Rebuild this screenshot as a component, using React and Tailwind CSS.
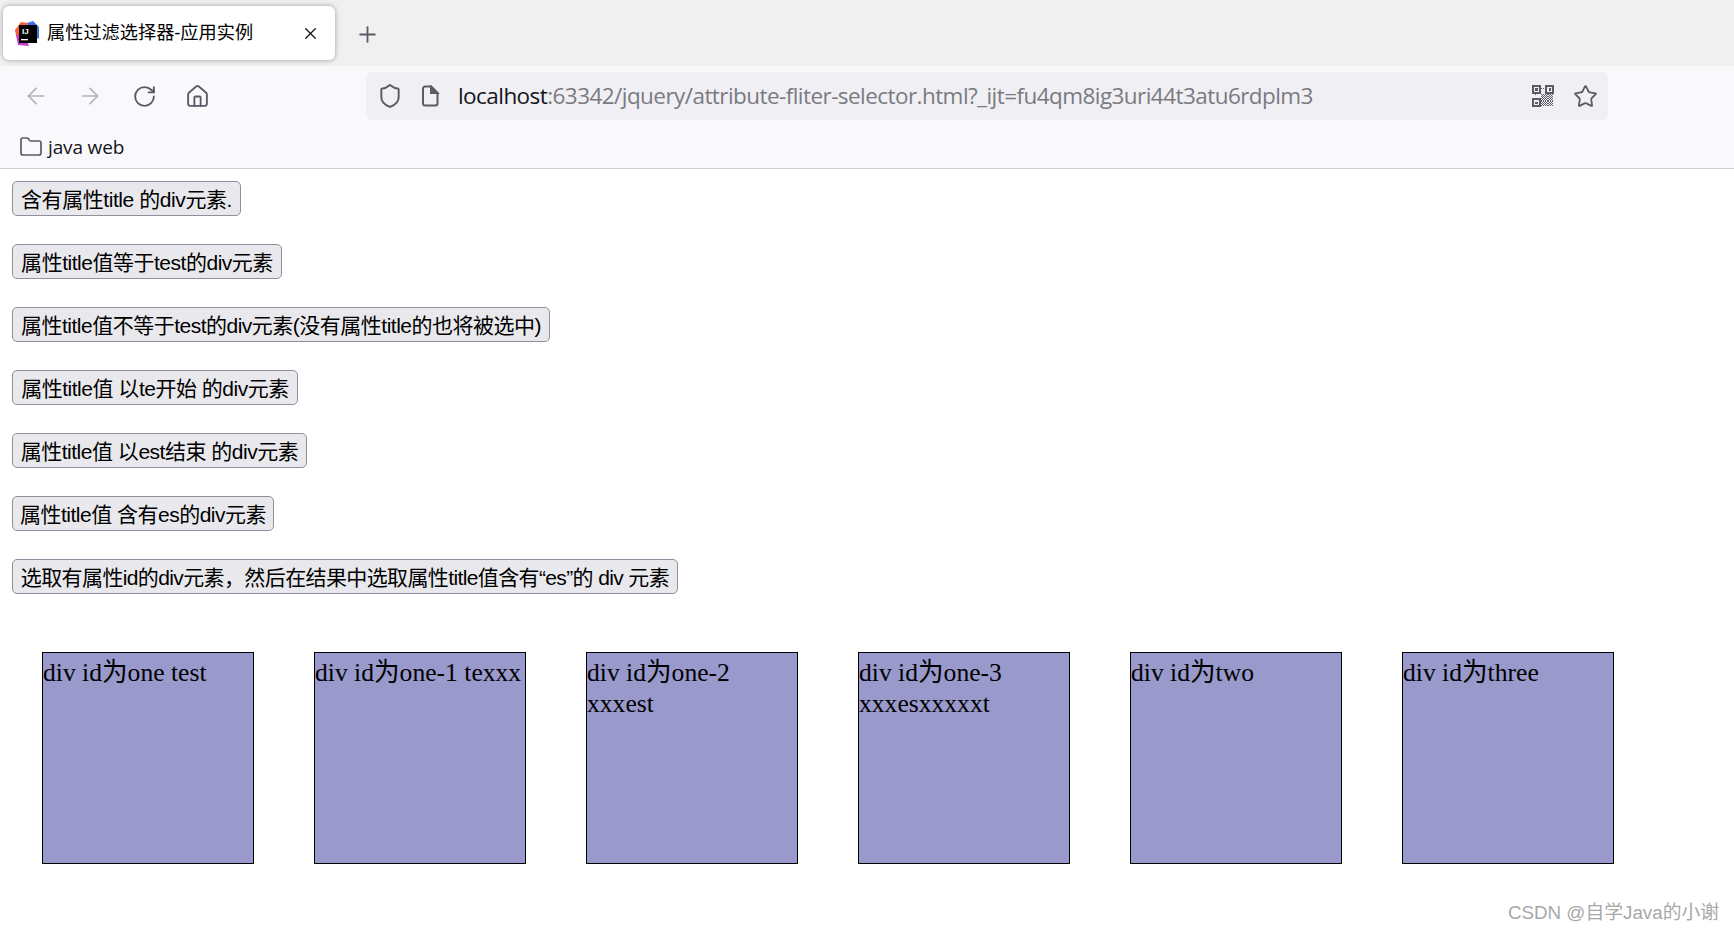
import React from "react";
import { ArrowLeft, ArrowRight, RotateCw, House, Shield, Star, Folder, X, Plus } from "lucide-react";

const cjk = "font-['Liberation_Sans','Noto_Sans_CJK_SC',sans-serif]";

const buttons = [
  { t: "含有属性title 的div元素.", w: "w-[229px]", s: "tracking-[-0.42px]" },
  { t: "属性title值等于test的div元素", w: "w-[270px]", s: "tracking-[-0.48px]" },
  { t: "属性title值不等于test的div元素(没有属性title的也将被选中)", w: "w-[538px]", s: "tracking-[-0.5px]" },
  { t: "属性title值 以te开始 的div元素", w: "w-[286px]", s: "tracking-[-0.48px]" },
  { t: "属性title值 以est结束 的div元素", w: "w-[295px]", s: "tracking-[-0.48px]" },
  { t: "属性title值 含有es的div元素", w: "w-[262px]", s: "tracking-[-0.5px]" },
  { t: "选取有属性id的div元素，然后在结果中选取属性title值含有“es”的 div 元素", w: "w-[666px]", s: "tracking-[-0.62px]" },
];

const boxes = [
  "div id为one test",
  "div id为one-1 texxx",
  "div id为one-2 xxxest",
  "div id为one-3 xxxesxxxxxt",
  "div id为two",
  "div id为three",
];

function Favicon() {
  return (
    <svg width="24" height="25" viewBox="0 0 24 25">
      <path d="M0 9 L6 1 L13 2 L9 15 L1 14 Z" fill="#ff5a36" />
      <path d="M12 2 L18 0 L24 6 L24 18 L16 14 Z" fill="#3f6fe8" />
      <path d="M1 14 L3 24 L14 25 L9 13 Z" fill="#c83ac8" />
      <rect x="4" y="4" width="18" height="18" fill="#000" />
      <text x="7" y="13" fontSize="8" fontWeight="700" fill="#fff" fontFamily="Liberation Sans">IJ</text>
      <rect x="6" y="18" width="7" height="1.3" fill="#fff" />
    </svg>
  );
}

function PageIcon() {
  return (
    <svg width="20" height="22" viewBox="0 0 20 22" fill="none" stroke="#5b5b66" strokeWidth="2">
      <path d="M3 3.5 A2 2 0 0 1 5 1.5 H11 L17.5 8 V18.5 A2 2 0 0 1 15.5 20.5 H5 A2 2 0 0 1 3 18.5 Z" />
      <path d="M11 1.5 L17.5 8 H11 Z" fill="#5b5b66" />
    </svg>
  );
}

function Qr() {
  const cells = [
    [8, 3], [10, 3], [3, 8], [8, 8], [10, 8], [12, 8], [14, 8], [16, 8], [18, 8],
    [9, 9], [11, 9], [13, 9], [15, 9], [17, 9],
    [8, 10], [10, 10], [12, 10], [14, 10], [16, 10], [18, 10],
    [9, 11], [11, 11], [13, 11], [15, 11], [17, 11],
    [8, 12], [10, 12], [12, 12], [14, 12], [16, 12], [18, 12],
    [9, 13], [11, 13], [13, 13], [15, 13], [17, 13],
    [8, 14], [10, 14], [12, 14], [14, 14], [16, 14], [18, 14],
    [9, 15], [11, 15], [13, 15], [15, 15], [17, 15],
    [8, 16], [10, 16], [12, 16], [14, 16], [16, 16], [18, 16],
    [9, 17], [11, 17], [13, 17], [15, 17], [17, 17],
    [8, 18], [10, 18], [12, 18], [14, 18], [16, 18], [18, 18],
  ];
  return (
    <svg width="22" height="22" viewBox="0 0 20 20" fill="#5b5b66" shapeRendering="crispEdges">
      {[[0, 0], [12, 0], [0, 12]].map(([x, y], i) => (
        <g key={i}>
          <rect x={x + 0.75} y={y + 0.75} width="6.5" height="6.5" fill="none" stroke="#5b5b66" strokeWidth="1.5" />
          <rect x={x + 3} y={y + 3} width="2" height="2" />
        </g>
      ))}
      {cells.map(([x, y], i) => (
        <rect key={i} x={x} y={y} width="1" height="1" />
      ))}
    </svg>
  );
}

export default function App() {
  return (
    <div className={`min-h-[931px] bg-white text-black ${cjk}`}>
      <div className="h-[66px] bg-[#f0f0f1] flex items-start pl-[3px] pt-[6px]">
        <div className="w-[332px] h-[54px] bg-white rounded-[6px] shadow-[0_0_5px_rgba(0,0,0,0.35)] flex items-center pl-[12px] pr-[15px]">
          <Favicon />
          <span className="ml-[8px] pt-[1px] text-[18.2px] flex-1 whitespace-nowrap">属性过滤选择器-应用实例</span>
          <X size={19} strokeWidth={1.6} color="#15141a" />
        </div>
        <div className="ml-[20px] mt-[16px]">
          <Plus size={25} strokeWidth={1.8} color="#5b5b66" />
        </div>
      </div>

      <div className="h-[102px] bg-[#f9f9fb] border-b border-[#cfcfd8] box-content">
        <div className="h-[54px] pt-[6px] flex items-center">
          <div className="w-[366px] flex items-center pl-[23px] gap-[28px]">
            <ArrowLeft size={26} strokeWidth={1.6} color="#b3b3b8" />
            <ArrowRight size={26} strokeWidth={1.6} color="#b3b3b8" />
            <span className="ml-[1px]"><RotateCw size={25} strokeWidth={1.8} color="#5b5b66" /></span>
            <House size={25} strokeWidth={1.8} color="#5b5b66" />
          </div>
          <div className="w-[1242px] h-[48px] bg-[#f0f0f4] rounded-[6px] flex items-center pl-[11px] pr-[10px]">
            <Shield size={26} strokeWidth={1.8} color="#5b5b66" />
            <span className="ml-[17px]"><PageIcon /></span>
            <span className="ml-[18px] text-[22.5px] whitespace-nowrap font-['Open_Sans','Liberation_Sans',sans-serif] tracking-[-0.56px] flex-1 text-[#7a7a80]">
              <span className="text-[#15141a]">localhost</span>:63342/jquery/attribute-fliter-selector.html?_ijt=fu4qm8ig3uri44t3atu6rdplm3
            </span>
            <Qr />
            <span className="ml-[19px]"><Star size={25} strokeWidth={1.7} color="#5b5b66" /></span>
          </div>
        </div>
        <div className="h-[48px] pt-[6px] flex items-center pl-[19px]">
          <Folder size={24} strokeWidth={1.7} color="#5b5b66" />
          <span className="ml-[5px] text-[19px] tracking-[-0.15px] font-['Open_Sans','Liberation_Sans',sans-serif] text-[#15141a]">java web</span>
        </div>
      </div>

      <div className="pl-[12px] pt-[12px] flex flex-col gap-[28px] items-start">
        {buttons.map((b) => (
          <button
            key={b.t}
            className={`${b.w} ${b.s} h-[35px] pt-[2px] bg-[#e9e9ed] border border-[#8f8f9d] rounded-[5px] text-[21px] leading-none whitespace-nowrap flex items-center justify-center text-black`}
          >
            {b.t}
          </button>
        ))}
      </div>

      <div className="pl-[42px] pt-[58px] flex gap-[60px]">
        {boxes.map((t) => (
          <div
            key={t}
            className="w-[212px] h-[212px] bg-[#9999cc] border border-black text-[25.6px] leading-[31px] pt-[4px] font-['Liberation_Serif','Noto_Sans_CJK_SC',serif] text-black"
          >
            {t}
          </div>
        ))}
      </div>

      <div className="flex justify-end pr-[15px] pt-[37px] text-[18.8px] leading-[24px] text-[#a8a8a8]">
        CSDN @自学Java的小谢
      </div>
    </div>
  );
}
